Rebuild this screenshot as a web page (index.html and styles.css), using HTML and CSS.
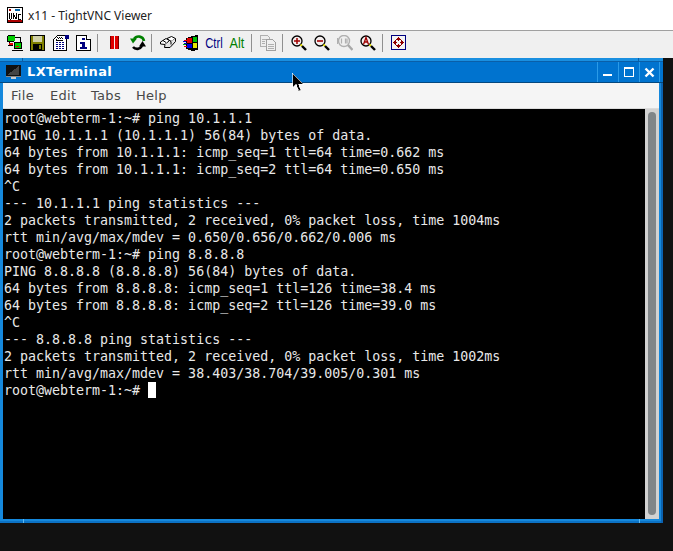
FILE: index.html
```
<!DOCTYPE html>
<html lang="en">
<head>
<meta charset="utf-8">
<title>x11 - TightVNC Viewer</title>
<link rel="stylesheet" href="styles.css">
</head>
<body>
<header class="appbar">
  <svg class="appicon" width="16" height="16" viewBox="0 0 16 16" shape-rendering="crispEdges">
    <rect x="0.5" y="0.5" width="15" height="15" fill="#fff" stroke="#000"/>
    <path d="M2 2l2 2M4 2l-2 2" stroke="#a00" fill="none"/>
    <rect x="8" y="2" width="5" height="2" fill="#06a"/>
    <path d="M2 6l1 6h1l1-6M6 12V6l3 6V6M14 7h-3v5h3" stroke="#000" fill="none"/>
    <rect x="1" y="13" width="14" height="2" fill="#a00"/>
  </svg>
  <span class="apptitle">x11 - TightVNC Viewer</span>
</header>

<nav class="toolbar">
  <span class="tool"><svg width="16" height="16" viewBox="0 0 16 16" shape-rendering="crispEdges">
    <rect x="1" y="0" width="7" height="6" fill="#00d000"/>
    <rect x="8" y="7" width="7" height="6" fill="#00d000"/>
    <path d="M0.500 0.500H8M8 2.500H13.500V7M1 6.500H6.500M0.500 0.500V6.500M1 10.500H6M2.500 7V10M7.500 7.500H14.500V13.500H7.500Z" fill="none" stroke="#000"/>
    <rect x="2" y="8" width="4" height="2" fill="#e00"/>
    <rect x="9" y="11" width="3" height="1" fill="#e00"/>
    <path d="M5 15h11" stroke="#000"/>
  </svg></span>
  <span class="tool"><svg width="16" height="16" viewBox="0 0 16 16" shape-rendering="crispEdges">
    <rect x="0.5" y="0.5" width="14" height="14.500" fill="#808000" stroke="#000"/>
    <rect x="3" y="1" width="9" height="6" fill="#d0d0a8"/>
    <rect x="3" y="9" width="9" height="6" fill="#000"/>
    <rect x="9" y="10" width="2" height="4" fill="#808000"/>
  </svg></span>
  <span class="tool"><svg width="16" height="16" viewBox="0 0 16 16" shape-rendering="crispEdges">
    <path d="M0.500 4.500L4.500 0.500H13.500V15.500H0.500Z" fill="#fff" stroke="#000"/>
    <rect x="12" y="0" width="4" height="4" fill="#000080"/>
    <path d="M3 7h8M3 9h8M3 11h8M3 13h8" stroke="#000080" stroke-dasharray="2 1" fill="none"/>
    <path d="M4 2h1M5 3h1M6 2h1M7 3h1M8 2h1M9 3h1M3 4h1M3 5h7" stroke="#000"/>
  </svg></span>
  <span class="tool"><svg width="16" height="16" viewBox="0 0 16 16" shape-rendering="crispEdges">
    <path d="M0.500 0.500H10.500L14.500 4.500V15.500H0.500Z" fill="#fff" stroke="#000"/>
    <path d="M10.500 0.500V4.500H14.500" fill="#fff" stroke="#000"/>
    <rect x="6" y="3" width="3" height="2" fill="#000080"/>
    <path d="M4 7h5v5h2v2H4v-2h2V9H4z" fill="#000080"/>
  </svg></span>
  <span class="sep"></span>
  <span class="tool"><svg width="16" height="16" viewBox="0 0 16 16" shape-rendering="crispEdges">
    <rect x="3" y="1" width="4" height="13" fill="#e00000"/>
    <rect x="8" y="1" width="4" height="13" fill="#e00000"/>
    <path d="M3.500 1v13M11.500 1v13" stroke="#700"/>
  </svg></span>
  <span class="tool"><svg width="16" height="16" viewBox="0 0 16 16">
    <path d="M14 6A5.500 5.500 0 0 0 4 4" fill="none" stroke="#008000" stroke-width="2.600"/>
    <path d="M0 3.500h7L3 8.500z" fill="#008000"/>
    <path d="M3 12A5.500 5.500 0 0 0 12 11" fill="none" stroke="#000" stroke-width="2.600"/>
    <path d="M16 11.500H9L12.500 6z" fill="#000"/>
  </svg></span>
  <span class="sep sep-tight"></span>
  <span class="tool"><svg width="16" height="16" viewBox="0 0 16 16">
    <path d="M0.500 7L6 3.500L9.500 5.500L5 9.500L0.500 9Z" fill="#fff" stroke="#000"/>
    <path d="M7 3.500L11.500 1.500L15.500 3.500L11 6.500Z" fill="#fff" stroke="#000"/>
    <path d="M5 9.500L4.500 12.500L10 12.500L15.500 6.500V3.500" fill="#e4e4e4" stroke="#000"/>
    <path d="M9.500 5.500L11 6.500V9.500M3 5.500l3 2" fill="none" stroke="#000"/>
  </svg></span>
  <span class="tool"><svg width="16" height="16" viewBox="0 0 16 16" shape-rendering="crispEdges">
    <path d="M3 3L9 1L15 0V15L9 16L3 14Z" fill="#000"/>
    <rect x="1" y="5" width="3" height="1" fill="#e00"/><rect x="1" y="8" width="3" height="1" fill="#00c"/><rect x="1" y="11" width="3" height="1" fill="#e00"/>
    <rect x="0" y="6" width="3" height="1" fill="#00c"/><rect x="0" y="9" width="3" height="1" fill="#0a0"/>
    <rect x="4" y="3" width="5" height="5" fill="#e00000"/>
    <rect x="10" y="2" width="4" height="5" fill="#00c000"/>
    <rect x="4" y="9" width="5" height="4" fill="#0000e0"/>
    <rect x="10" y="8" width="4" height="5" fill="#e8e800"/>
  </svg></span>
  <span class="tool tool-text tool-ctrl">Ctrl</span>
  <span class="tool tool-text tool-alt">Alt</span>
  <span class="sep sep-wide"></span>
  <span class="tool"><svg width="16" height="16" viewBox="0 0 16 16" shape-rendering="crispEdges">
    <path d="M0.500 0.500H7.500L9.500 2.500V11.500H0.500Z" fill="#eee" stroke="#b0b0b0"/>
    <path d="M6.500 4.500H12.500L15.500 7.500V15.500H6.500Z" fill="#f0f0f0" stroke="#a0a0a0"/>
    <path d="M8 9h6M8 11h6M8 13h6M2 4h4M2 6h3M2 8h3" stroke="#b0b0b0"/>
  </svg></span>
  <span class="sep sep-wide"></span>
  <span class="tool"><svg width="16" height="16" viewBox="0 0 16 16">
    <circle cx="6" cy="6" r="5" fill="#f4eeee" stroke="#000" stroke-width="1.300"/>
    <path d="M3 6h6M6 3v6" stroke="#a00000" stroke-width="1.500"/>
    <path d="M9.500 9.500L11 11" stroke="#e8e000" stroke-width="2"/>
    <path d="M11 11L15 15" stroke="#000" stroke-width="2.400"/>
  </svg></span>
  <span class="tool"><svg width="16" height="16" viewBox="0 0 16 16">
    <circle cx="6" cy="6" r="5" fill="#f4eeee" stroke="#000" stroke-width="1.300"/>
    <path d="M3 6h6" stroke="#a00000" stroke-width="1.600"/>
    <path d="M9.500 9.500L11 11" stroke="#e8e000" stroke-width="2"/>
    <path d="M11 11L15 15" stroke="#000" stroke-width="2.400"/>
  </svg></span>
  <span class="tool"><svg width="16" height="16" viewBox="0 0 16 16">
    <circle cx="7" cy="6" r="5.500" fill="#f0f0f0" stroke="#b0b0b0" stroke-width="1.400"/>
    <path d="M0.500 3v6M4.500 3.500v5M8.500 3.500v5M10 3.500v5" stroke="#b0b0b0" stroke-width="1.200" fill="none"/>
    <path d="M11 10L15.500 15" stroke="#a8a8a8" stroke-width="2.400"/>
  </svg></span>
  <span class="tool"><svg width="16" height="16" viewBox="0 0 16 16">
    <circle cx="6" cy="6" r="5" fill="#f4eeee" stroke="#000" stroke-width="1.300"/>
    <path d="M3.500 9.500L6 2.500L8.500 9.500M4.500 7h3" stroke="#a00000" stroke-width="1.300" fill="none"/>
    <path d="M9.500 9.500L11 11" stroke="#e8e000" stroke-width="2"/>
    <path d="M11 11L15 15" stroke="#000" stroke-width="2.400"/>
  </svg></span>
  <span class="sep sep-wide"></span>
  <span class="tool"><svg width="16" height="16" viewBox="0 0 16 16" shape-rendering="crispEdges">
    <rect x="0.500" y="0.500" width="14" height="14" fill="#f4f4f4" stroke="#000080"/>
    <path d="M7 2h1v1h1v1h1v1H8v1H7V5H5V4h1V3h1zM2 7h1V6h1V5h1v2h1v1H5v2H4V9H3V8H2zM13 7h-1V6h-1V5h-1v2H9v1h1v2h1V9h1V8h1zM7 9h1v1h2v1H9v1H8v1H7v-1H6v-1H5v-1h2z" fill="#900000"/>
  </svg></span>
</nav>

<main class="desktop">
  <section class="window">
    <div class="titlebar">
      <span class="wintitle-icon"><svg width="15" height="15" viewBox="0 0 15 15" shape-rendering="crispEdges">
        <rect x="0" y="0" width="15" height="11" fill="#111"/>
        <path d="M1 10L13 1V10Z" fill="#444"/>
        <rect x="0" y="11" width="15" height="1" fill="#888"/>
        <rect x="5" y="12" width="5" height="2" fill="#ccc"/>
      </svg></span>
      <h1 class="wintitle">LXTerminal</h1>
      <span class="winbtn"><svg width="10" height="10" viewBox="0 0 10 10" shape-rendering="crispEdges"><rect x="0" y="7" width="9" height="2" fill="#fff"/></svg></span>
      <span class="winbtn"><svg width="10" height="10" viewBox="0 0 10 10" shape-rendering="crispEdges"><path d="M0.500 1.500H9.500V9.500H0.500Z" fill="none" stroke="#fff"/><rect x="0" y="0" width="10" height="2" fill="#fff"/></svg></span>
      <span class="winbtn winbtn-close"><svg width="11" height="11" viewBox="0 0 11 11"><path d="M1.500 1.500L9.500 9.500M9.500 1.500L1.500 9.500" stroke="#fff" stroke-width="2.400"/></svg></span>
    </div>
    <div class="menubar">
      <span class="menu menu-file">File</span>
      <span class="menu menu-edit">Edit</span>
      <span class="menu menu-tabs">Tabs</span>
      <span class="menu">Help</span>
    </div>
    <div class="termwrap">
<pre class="terminal">root@webterm-1:~# ping 10.1.1.1
PING 10.1.1.1 (10.1.1.1) 56(84) bytes of data.
64 bytes from 10.1.1.1: icmp_seq=1 ttl=64 time=0.662 ms
64 bytes from 10.1.1.1: icmp_seq=2 ttl=64 time=0.650 ms
^C
--- 10.1.1.1 ping statistics ---
2 packets transmitted, 2 received, 0% packet loss, time 1004ms
rtt min/avg/max/mdev = 0.650/0.656/0.662/0.006 ms
root@webterm-1:~# ping 8.8.8.8
PING 8.8.8.8 (8.8.8.8) 56(84) bytes of data.
64 bytes from 8.8.8.8: icmp_seq=1 ttl=126 time=38.4 ms
64 bytes from 8.8.8.8: icmp_seq=2 ttl=126 time=39.0 ms
^C
--- 8.8.8.8 ping statistics ---
2 packets transmitted, 2 received, 0% packet loss, time 1002ms
rtt min/avg/max/mdev = 38.403/38.704/39.005/0.301 ms
root@webterm-1:~# <span class="caret"></span></pre>
      <div class="scrollbar"><div class="thumb"></div></div>
    </div>
  </section>
  <svg class="pointer" width="13" height="20" viewBox="0 0 13 20" shape-rendering="crispEdges">
    <path d="M0.500 0.500V15.500L4 12L6.500 18.500H9L6.500 12H11.500Z" fill="#000" stroke="#fff" stroke-width="0.600"/>
  </svg>
</main>
</body>
</html>
```

FILE: styles.css
```
* { box-sizing: border-box; }
html, body { margin: 0; height: 100%; }
body {
  width: 673px;
  height: 551px;
  overflow: hidden;
  display: flex;
  flex-direction: column;
  background: #111;
  font-family: "DejaVu Sans", sans-serif;
}
.appbar {
  height: 30px;
  flex: none;
  background: #fff;
  display: flex;
  align-items: center;
  padding-left: 7px;
  gap: 5px;
}
.apptitle {
  font: 12px "Noto Sans", "Open Sans", sans-serif;
  color: #222;
}
.toolbar {
  height: 28px;
  flex: none;
  background: #f0f0f0;
  border-top: 1px solid #a0a0a0;
  display: flex;
  align-items: center;
  padding: 0 0 3px 3px;
}
.tool {
  width: 23px;
  height: 16px;
  flex: none;
  padding-left: 4px;
  display: block;
}
.tool svg { display: block; }
.tool-text {
  font: 14px/17px "Liberation Sans", sans-serif;
  white-space: nowrap;
  transform-origin: left center;
}
.tool-ctrl {
  color: #000080;
  transform: scaleX(0.8);
}
.tool-alt {
  color: #008000;
  padding-left: 5px;
  transform: scaleX(0.9);
}
.sep {
  width: 1px;
  height: 18px;
  flex: none;
  background: #909090;
  margin: 0 5px 0 2px;
}
.sep-tight { margin-right: 4px; }
.sep-wide { margin: 0 4px 0 3px; }
.desktop {
  flex: 1;
  position: relative;
  min-height: 0;
}
.window {
  position: relative;
  width: 663px;
  height: 465px;
  display: flex;
  flex-direction: column;
  background: #1588dc;
  border-top: 3px solid #1a8fe0;
  box-shadow: inset -2px 0 0 #0b62b0, inset 0 -2px 0 #0c72c4;
}
.window::before,
.window::after {
  content: "";
  position: absolute;
  top: -3px;
  width: 1px;
  height: 4px;
  background: #0a5fa8;
}
.window::before { left: 22px; }
.window::after { left: 638px; }
.titlebar {
  height: 22px;
  flex: none;
  display: flex;
  align-items: center;
  background: #0073cf;
  border-top: 1px solid #0a5fa8;
  border-bottom: 1px solid #04487f;
  padding-left: 6px;
}
.wintitle-icon { width: 16px; height: 15px; flex: none; }
.wintitle-icon svg { display: block; }
.wintitle {
  flex: 1;
  margin: 0 0 0 5px;
  font: bold 13px/16px "DejaVu Sans", sans-serif;
  letter-spacing: 0.4px;
  color: #fff;
}
.winbtn {
  width: 21px;
  height: 20px;
  flex: none;
  display: flex;
  align-items: center;
  justify-content: center;
  border-left: 1px solid #2a9be8;
}
.winbtn-close {
  margin-right: 3px;
  border-right: 1px solid #2a9be8;
}
.menubar {
  height: 26px;
  flex: none;
  margin: 0 4px 0 3px;
  background: #f5f5f5;
  border-bottom: 1px solid #dcdcdc;
  display: flex;
  align-items: center;
  padding-left: 8px;
  font-size: 13px;
  letter-spacing: 0.3px;
  color: #484848;
}
.menu { display: block; }
.menu-file { width: 39px; }
.menu-edit { width: 41px; }
.menu-tabs { width: 45px; }
.termwrap {
  position: relative;
  flex: 1;
  min-height: 0;
  margin: 0 4px 4px 3px;
  display: flex;
}
.termwrap::before,
.termwrap::after {
  content: "";
  position: absolute;
  bottom: -4px;
  width: 1px;
  height: 4px;
  background: #5cb8f0;
}
.termwrap::before { left: 20px; }
.termwrap::after { left: 636px; }
.terminal {
  flex: 1;
  margin: 0;
  padding: 1px 0 0 1px;
  background: #000;
  color: #e8e8e8;
  font: 13.3px/17px "DejaVu Sans Mono", monospace;
}
.caret {
  display: inline-block;
  width: 8px;
  height: 16px;
  background: #fff;
  vertical-align: -3px;
}
.scrollbar {
  width: 14px;
  flex: none;
  background: #d2d2d2;
  padding: 3px 3px 4px;
}
.thumb {
  height: 100%;
  background: #808588;
  border-radius: 4px;
}
.pointer {
  position: absolute;
  left: 292px;
  top: 14px;
}
```
